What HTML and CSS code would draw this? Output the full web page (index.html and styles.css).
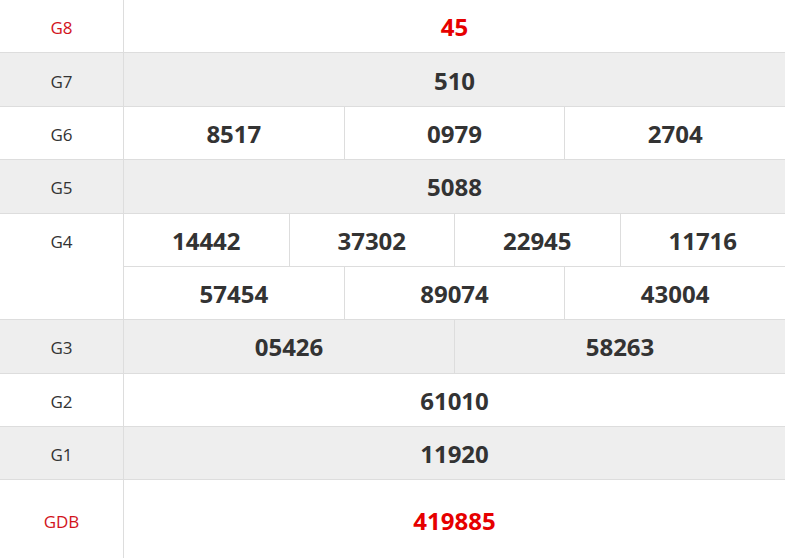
FILE: index.html
```html
<!DOCTYPE html>
<html lang="vi">
<head>
<meta charset="utf-8">
<title>Kết quả xổ số</title>
<link rel="stylesheet" href="styles.css">
</head>
<body>
<div class="board">
  <div class="row">
    <div class="label red">G8</div>
    <div class="cells"><div class="line"><div class="cell num-red">45</div></div></div>
  </div>
  <div class="row grey">
    <div class="label">G7</div>
    <div class="cells"><div class="line"><div class="cell">510</div></div></div>
  </div>
  <div class="row">
    <div class="label">G6</div>
    <div class="cells"><div class="line"><div class="cell">8517</div><div class="cell">0979</div><div class="cell">2704</div></div></div>
  </div>
  <div class="row grey">
    <div class="label">G5</div>
    <div class="cells"><div class="line"><div class="cell">5088</div></div></div>
  </div>
  <div class="row">
    <div class="label top">G4</div>
    <div class="cells">
      <div class="line"><div class="cell">14442</div><div class="cell">37302</div><div class="cell">22945</div><div class="cell">11716</div></div>
      <div class="line"><div class="cell">57454</div><div class="cell">89074</div><div class="cell">43004</div></div>
    </div>
  </div>
  <div class="row grey">
    <div class="label">G3</div>
    <div class="cells"><div class="line"><div class="cell">05426</div><div class="cell">58263</div></div></div>
  </div>
  <div class="row">
    <div class="label">G2</div>
    <div class="cells"><div class="line"><div class="cell">61010</div></div></div>
  </div>
  <div class="row grey">
    <div class="label">G1</div>
    <div class="cells"><div class="line"><div class="cell">11920</div></div></div>
  </div>
  <div class="row">
    <div class="label red">GDB</div>
    <div class="cells"><div class="line tall"><div class="cell num-red">419885</div></div></div>
  </div>
</div>
</body>
</html>
```
FILE: styles.css
```css
html, body {
  margin: 0;
  padding: 0;
  background: #fff;
  overflow: hidden;
}
body {
  font-family: "Open Sans", "Noto Sans", sans-serif;
  color: #333;
}
.board {
  width: 785px;
}
.row {
  display: grid;
  grid-template-columns: 124px 1fr;
  border-bottom: 1px solid #ddd;
  background: #fff;
}
.row.grey {
  background: #eee;
}
.label {
  border-right: 1px solid #ddd;
  display: flex;
  align-items: center;
  justify-content: center;
  font-size: 17px;
  color: #333;
  padding-top: 3px;
}
.label.top {
  align-items: flex-start;
  padding-top: 16px;
}
.label.red {
  color: #d2141c;
}
.cells {
  display: flex;
  flex-direction: column;
}
.line {
  display: flex;
  height: 52.375px;
}
.line + .line {
  border-top: 1px solid #ddd;
}
.line.tall {
  height: 80px;
}
.cell {
  flex: 1 1 0;
  display: flex;
  align-items: center;
  justify-content: center;
  font-size: 24px;
  font-weight: 700;
  color: #333;
  padding-top: 1px;
}
.cell + .cell {
  border-left: 1px solid #ddd;
}
.num-red {
  color: #e60000;
}
```
